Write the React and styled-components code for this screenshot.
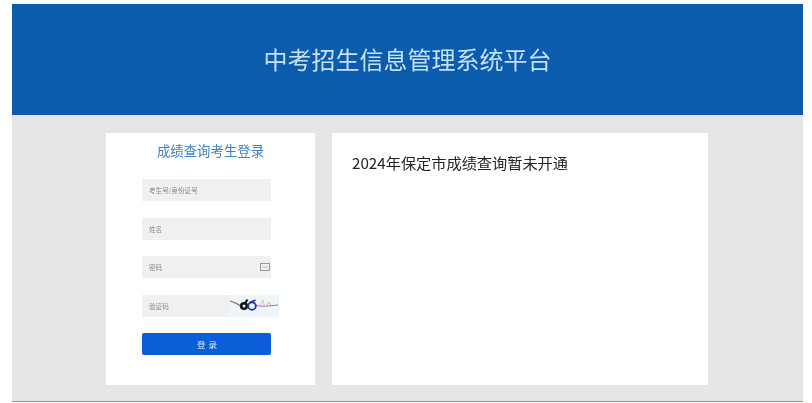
import styled, { createGlobalStyle } from "styled-components";

const GlobalStyle = createGlobalStyle`
	html, body {
		margin: 0;
		padding: 0;
		background: #fff;
		font-family: "Noto Sans CJK SC", "Open Sans", sans-serif;
	}
`;

const Frame = styled.div`
	width: 791px;
	margin: 4px 0 0 12px;
	border-bottom: 1px solid #6f9fd0;
	filter: blur(0.45px);
`;

const Header = styled.header`
	height: 111px;
	padding-bottom: 2px;
	box-sizing: border-box;
	background: #0b5cad;
	display: flex;
	align-items: center;
	justify-content: center;
`;

const HeaderTitle = styled.h1`
	margin: 0;
	font-size: 24px;
	font-weight: 400;
	line-height: 1;
	color: #c5e0f7;
`;

const Body = styled.main`
	height: 286px;
	box-sizing: border-box;
	background: #e6e6e6;
	padding: 18px 95px 0 94px;
	display: flex;
	gap: 17px;
`;

const LoginCard = styled.section`
	width: 209px;
	height: 252px;
	box-sizing: border-box;
	background: #fff;
	padding: 7px 44px 0 36px;
`;

const CardTitle = styled.h2`
	margin: 0 -16px 19px -8px;
	height: 20px;
	font-size: 13.4px;
	font-weight: 400;
	line-height: 20px;
	text-align: center;
	color: #3b82c0;
`;

const Form = styled.div`
	display: flex;
	flex-direction: column;
	gap: 16.5px;
`;

const Field = styled.div`
	position: relative;
	height: 22px;
	background: #f0f0f0;
	display: flex;
	align-items: center;
	padding-left: 7px;
`;

const Hint = styled.span`
	font-size: 6.6px;
	color: #8a8a8a;
`;

const KeyIcon = styled.svg`
	position: absolute;
	right: 1px;
	top: 7px;
	width: 10px;
	height: 8px;
`;

const Captcha = styled.svg`
	position: absolute;
	right: -8px;
	top: 0;
	width: 50px;
	height: 22px;
	background: #eff6fb;
`;

const LoginButton = styled.button`
	height: 22px;
	border: none;
	border-radius: 2px;
	background: #0b5ed7;
	color: #dce8f8;
	font-family: inherit;
	font-size: 8.5px;
	letter-spacing: 3px;
	padding: 0 0 0 4px;
`;

const NoticeCard = styled.section`
	width: 376px;
	height: 252px;
	box-sizing: border-box;
	background: #fff;
	padding: 18px 20px 0;
`;

const Notice = styled.p`
	margin: 0;
	font-size: 15.2px;
	line-height: 22px;
	color: #222;
`;

const App = () => {
	return (
		<>
			<GlobalStyle />
			<Frame>
				<Header>
					<HeaderTitle>中考招生信息管理系统平台</HeaderTitle>
				</Header>
				<Body>
					<LoginCard>
						<CardTitle>成绩查询考生登录</CardTitle>
						<Form>
							<Field>
								<Hint>考生号/身份证号</Hint>
							</Field>
							<Field>
								<Hint>姓名</Hint>
							</Field>
							<Field>
								<Hint>密码</Hint>
								<KeyIcon viewBox="0 0 10 8">
									<rect x="0.5" y="0.5" width="9" height="7" fill="none" stroke="#999" />
									<path d="M2.5 4h5" stroke="#bbb" />
								</KeyIcon>
							</Field>
							<Field>
								<Hint>验证码</Hint>
								<Captcha viewBox="0 0 50 22">
									<path d="M1 6c5 1 9 4 13 6.500" stroke="#8a5a50" strokeWidth="1.100" fill="none" />
									<path d="M26 10c6 2 14 1 23 0" stroke="#c060a8" strokeWidth="1" fill="none" />
									<path d="M30 11l4-6 1 6" stroke="#e6cf50" strokeWidth="0.900" fill="none" />
									<path d="M38 10l2-3 2 3" stroke="#d8a060" strokeWidth="0.800" fill="none" />
									<circle cx="15" cy="11" r="2.800" fill="none" stroke="#141414" strokeWidth="2.600" />
									<path d="M15.500 9l3-4.500" stroke="#141414" strokeWidth="2.200" />
									<circle cx="23" cy="11" r="3.800" fill="none" stroke="#26389a" strokeWidth="1.900" />
									<path d="M21 7.500l5.500-2.500" stroke="#26389a" strokeWidth="1.600" />
								</Captcha>
							</Field>
							<LoginButton>登录</LoginButton>
						</Form>
					</LoginCard>
					<NoticeCard>
						<Notice>2024年保定市成绩查询暂未开通</Notice>
					</NoticeCard>
				</Body>
			</Frame>
		</>
	);
};

export default App;
